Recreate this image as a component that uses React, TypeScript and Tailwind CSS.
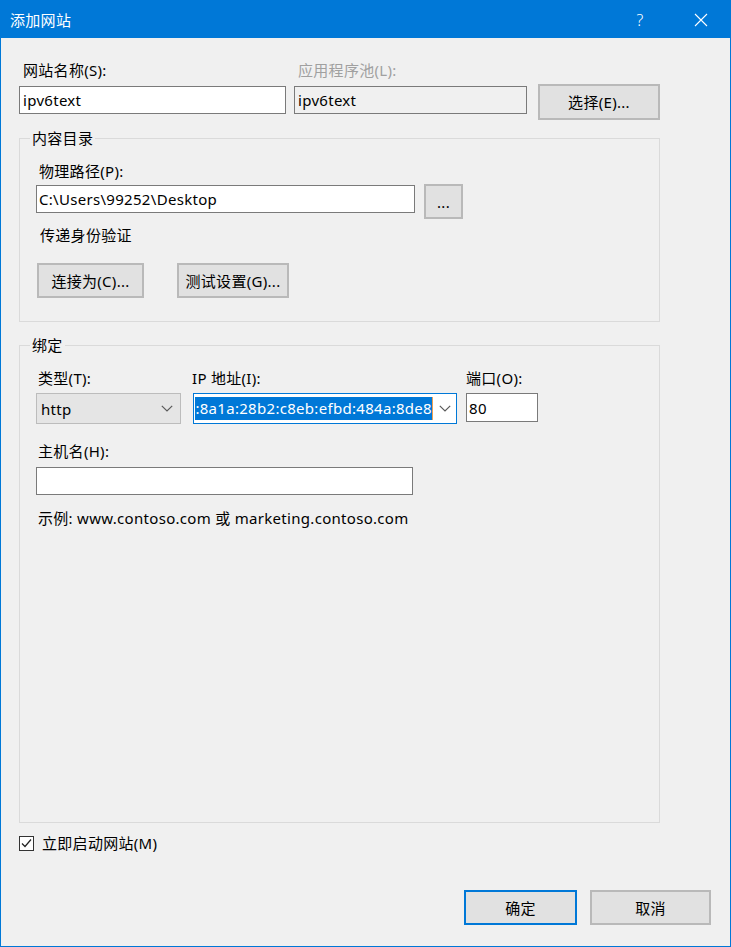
function Chevron() {
  return (
    <svg width="12" height="7" viewBox="0 0 12 7">
      <path d="M0.8 0.8 L6 6 L11.2 0.8" stroke="#5a5a5a" strokeWidth="1.2" fill="none" />
    </svg>
  );
}

function Button({ label, className = "", primary = false }: { label: string; className?: string; primary?: boolean }) {
  return (
    <button
      className={
        "flex items-center justify-center h-[35px] bg-[#e1e1e1] text-black " +
        (primary ? "border-2 border-[#0078d7] " : "border-2 border-[#b9b9b9] ") +
        className
      }
    >
      {label}
    </button>
  );
}

function Label({ text, className = "" }: { text: string; className?: string }) {
  return <div className={"h-[20px] leading-[20px] whitespace-nowrap " + className}>{text}</div>;
}

export default function App() {
  return (
    <div className="w-[731px] h-[947px] flex flex-col bg-[#f0f0f0] border border-[#0078d7] text-[15px] leading-[20px] tracking-[0.3px] text-black font-['Noto_Sans','Noto_Sans_CJK_SC',sans-serif]">
      {/* Title bar */}
      <div className="h-[37px] shrink-0 bg-[#0078d7] flex items-center pl-[9px] text-white">
        <span className="flex-1">添加网站</span>
        <span className="w-[20px] text-center font-light text-[16px] mr-[44px]">?</span>
        <svg width="14" height="14" viewBox="0 0 14 14" className="mr-[22px]">
          <path d="M1 1 L13 13 M13 1 L1 13" stroke="white" strokeWidth="1.1" fill="none" />
        </svg>
      </div>

      <div className="flex flex-col pl-[18px] pr-[19px] pt-[22px]">
        {/* Site name row */}
        <div className="flex items-start">
          <div className="w-[267px] flex flex-col">
            <Label text="网站名称(S):" className="pl-[4px]" />
            <div className="mt-[6px] h-[28px] bg-white border border-[#7a7a7a] pl-[3px] flex items-center">ipv6text</div>
          </div>
          <div className="ml-[8px] w-[233px] flex flex-col">
            <Label text="应用程序池(L):" className="pl-[4px] text-[#a0a0a0]" />
            <div className="mt-[6px] h-[28px] bg-[#f0f0f0] border border-[#7a7a7a] pl-[3px] flex items-center">ipv6text</div>
          </div>
          <Button label="选择(E)..." className="ml-[11px] mt-[24px] w-[122px] h-[36px]" />
        </div>

        {/* Content directory */}
        <fieldset className="mt-[8px] w-[641px] border border-[#dadada] pl-[16px] pb-[23px]">
          <legend className="ml-[-6px] px-[2px] h-[20px] leading-[20px]">内容目录</legend>
          <Label text="物理路径(P):" className="mt-[13px] pl-[3px]" />
          <div className="mt-[3px] flex items-start">
            <div className="mt-[1px] w-[379px] h-[28px] bg-white border border-[#7a7a7a] pl-[2px] flex items-center">
              C:\Users\99252\Desktop
            </div>
            <Button label="..." className="ml-[9px] w-[39px]" />
          </div>
          <Label text="传递身份验证" className="mt-[6px] pl-[4px]" />
          <div className="mt-[18px] flex gap-[33px] pl-[1px]">
            <Button label="连接为(C)..." className="w-[107px]" />
            <Button label="测试设置(G)..." className="w-[112px]" />
          </div>
        </fieldset>

        {/* Binding */}
        <fieldset className="mt-[13px] w-[641px] h-[488px] border border-[#dadada] pl-[16px]">
          <legend className="ml-[-6px] px-[2px] h-[20px] leading-[20px]">绑定</legend>
          <div className="mt-[13px] flex items-start">
            <div className="w-[145px] flex flex-col">
              <Label text="类型(T):" className="pl-[2px]" />
              <div className="mt-[5px] h-[31px] bg-[#e5e5e5] border border-[#bcbcbc] flex items-center pl-[4px] pr-[7px]">
                <span className="flex-1">http</span>
                <Chevron />
              </div>
            </div>
            <div className="ml-[12px] w-[264px] flex flex-col">
              <Label text="IP 地址(I):" className="ml-[-1px]" />
              <div className="mt-[5px] h-[31px] bg-white border border-[#0078d7] flex items-center pl-[1px] pr-[5px]">
                <div className="w-[238px] h-[23px] overflow-hidden flex justify-end">
                  <span className="whitespace-nowrap bg-[#0078d7] text-white leading-[23px] border-r border-[#f0a050]">
                    2408:8a1a:28b2:c8eb:efbd:484a:8de8
                  </span>
                </div>
                <div className="flex-1 flex justify-end">
                  <Chevron />
                </div>
              </div>
            </div>
            <div className="ml-[9px] w-[72px] flex flex-col">
              <Label text="端口(O):" />
              <div className="mt-[5px] h-[29px] bg-white border border-[#7a7a7a] pl-[2px] flex items-center">80</div>
            </div>
          </div>
          <Label text="主机名(H):" className="mt-[17px] pl-[2px]" />
          <div className="mt-[6px] w-[377px] h-[28px] bg-white border border-[#7a7a7a]" />
          <Label text="示例: www.contoso.com 或 marketing.contoso.com" className="mt-[13px] pl-[2px]" />
        </fieldset>

        {/* Start immediately */}
        <div className="mt-[10px] h-[20px] flex items-center">
          <div className="w-[15px] h-[15px] border border-[#333333] bg-white flex items-center justify-center">
            <svg width="11" height="11" viewBox="0 0 11 11">
              <path d="M1 5.5 L4 8.5 L10 1.5" stroke="#222222" strokeWidth="1.2" fill="none" />
            </svg>
          </div>
          <span className="ml-[8px]">立即启动网站(M)</span>
        </div>

        {/* Dialog buttons */}
        <div className="mt-[37px] flex justify-end gap-[13px]">
          <Button label="确定" primary className="w-[113px]" />
          <Button label="取消" className="w-[121px]" />
        </div>
      </div>
    </div>
  );
}
